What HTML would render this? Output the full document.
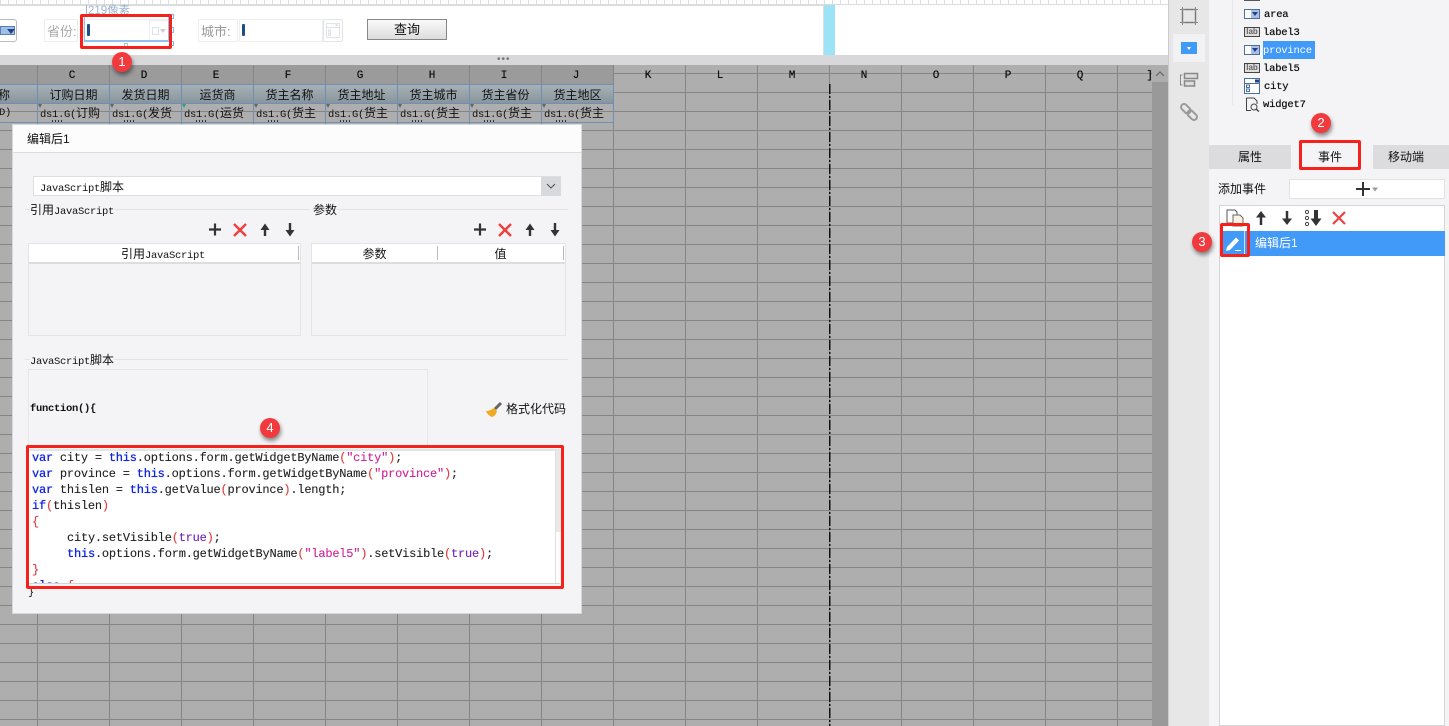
<!DOCTYPE html>
<html><head><meta charset="utf-8"><style>
html,body{margin:0;padding:0;width:1449px;height:726px;overflow:hidden;background:#fff}
body{position:relative;font-family:"Liberation Sans","Noto Sans CJK SC",sans-serif;font-size:12px;color:#111}
div,span,svg{position:absolute;box-sizing:border-box}
.t{white-space:nowrap;line-height:16px}
.m{font-family:"Liberation Mono","Noto Sans CJK SC",monospace;font-size:10.5px;letter-spacing:-.3px}
.z{position:static;font-family:"Liberation Sans","Noto Sans CJK SC",sans-serif;font-size:12px;letter-spacing:0}
.c{text-align:center}
.hc{top:67px;width:72px;height:18px;text-align:center;font:11px/19px "Liberation Mono",monospace;color:#111;text-shadow:0 0 .5px #111}
.h2{top:86px;height:18px;width:71px;text-align:center;font-size:12px;line-height:19px;color:#111;white-space:nowrap}
.d{top:104px;height:18px;width:71px;overflow:hidden;font:10.5px/18px "Liberation Mono",monospace;color:#111;white-space:nowrap;letter-spacing:-.3px;padding-left:2px}
.mk{top:104px;border:2.5px solid transparent;border-top:4px solid #666;border-bottom:0}
.dot{top:120px;width:12px;height:2px;background:repeating-linear-gradient(90deg,#333 0,#333 1px,transparent 1px,transparent 3px)}
.badge{width:20px;height:20px;border-radius:50%;background:#f03a3e;color:#fff;font-size:13px;line-height:20px;text-align:center;box-shadow:1px 3px 4px rgba(0,0,0,.45)}
.red{border:3px solid #f5211a;border-radius:2px}
.code{white-space:pre;font:12px/16px "Liberation Mono",monospace;letter-spacing:-.22px;color:#222;left:32px;text-shadow:0 0 .4px rgba(0,0,0,.45)}
.k{position:static;color:#0d22e0;text-shadow:0 0 .6px #0d22e0}.p{position:static;color:#f03a3a}.s{position:static;color:#dd1ea0}.b{position:static;color:#7a1fc8}.n{position:static}
.tree{font:10.5px/14px "Liberation Mono",monospace;color:#111;white-space:nowrap;letter-spacing:-.2px;text-shadow:0 0 .5px #111}
.ic{width:16px;height:10px;border:1px solid #4a6f9f;background:#fff}
.ic i{position:absolute;right:0;top:0;width:8px;height:8px;background:#a9c0e2}
.ic b{position:absolute;right:1px;top:2px;border:3px solid transparent;border-top:4px solid #23408c;border-bottom:0}
.lab{width:16px;height:10px;border:1px solid #444;background:#ddd;color:#666;font:bold 8px/8px "Liberation Sans",sans-serif;text-align:center}
.sec{height:1px;background:#e3e3e6}
</style></head><body>

<!-- top ruler -->
<div style="left:0;top:0;width:1169px;height:5px;background:repeating-linear-gradient(90deg,#ddd 0,#ddd 1px,#fff 1px,#fff 8px)"></div>
<div style="left:0;top:4px;width:1169px;height:2px;background:#dcdcde"></div>
<!-- parameter pane -->
<div style="left:824px;top:5px;width:11px;height:50px;background:#9be3f5"></div>
<div style="left:823px;top:5px;width:1px;height:50px;background:#ddd"></div>
<div style="left:0;top:55px;width:1169px;height:10px;background:#d8d8da"></div>
<div class="t" style="left:497px;top:52px;color:#777;font-size:10px;letter-spacing:1px">•••</div>

<!-- toolbar widgets -->
<div style="left:-8px;top:19px;width:25px;height:23px;border:1px solid #bbb;border-radius:3px;background:#fff"></div>
<div style="left:0;top:26px;width:15px;height:9px;background:#9fc0e6;border:1px solid #5a80b0"></div>
<div style="left:7px;top:29px;border:4px solid transparent;border-top:5px solid #23408c;border-bottom:0"></div>
<div class="t" style="left:85px;top:3px;color:#9bb3cc;font-size:11.500px;height:11px;overflow:hidden">|219像素</div>
<div style="left:44px;top:19px;width:34px;height:23px;border:1px solid #eee"></div>
<div class="t" style="left:47px;top:24px;color:#aaa;font-size:13px">省份:</div>
<div style="left:83px;top:19px;width:87px;height:23px;border:1px solid #eee"></div>
<div style="left:149px;top:20px;width:21px;height:21px;border:1px solid #eee"></div>
<div style="left:152px;top:27px;width:7px;height:8px;border:1px solid #dfe4ec"></div>
<div style="left:160px;top:29px;border:3px solid transparent;border-top:4px solid #ccd;border-bottom:0"></div>
<div style="left:87px;top:24px;width:3px;height:12px;background:#1c4f86;border-radius:1px"></div>
<div style="left:84px;top:40px;width:86px;height:2px;background:#8fc0ee"></div>
<div style="left:84px;top:17px;width:1px;height:25px;background:#8fc0ee"></div>
<div style="left:168px;top:17px;width:1px;height:25px;background:#8fc0ee"></div>
<div style="left:124px;top:43px;width:4px;height:4px;border:1px solid #9cc"></div>
<div style="left:170px;top:27px;width:4px;height:6px;border:1px solid #8fb8de"></div>
<div style="left:170px;top:41px;width:4px;height:5px;border:1px solid #8fb8de"></div>
<div style="left:170px;top:14px;width:4px;height:5px;border:1px solid #8fb8de"></div>
<div class="red" style="left:80px;top:14px;width:92px;height:35px"></div>
<div style="left:198px;top:19px;width:40px;height:23px;border:1px solid #eee"></div>
<div class="t" style="left:201px;top:24px;color:#999;font-size:13px">城市:</div>
<div style="left:239px;top:19px;width:84px;height:23px;border:1px solid #eee"></div>
<div style="left:242px;top:24px;width:3px;height:12px;background:#1c4f86;border-radius:1px"></div>
<div style="left:323px;top:19px;width:20px;height:23px;border:1px solid #e3e3e3;border-radius:2px"></div>
<svg style="left:326px;top:23px" width="14" height="15"><rect x=".5" y=".5" width="13" height="14" fill="#fff" stroke="#e0e3ea"/><path d="M.5 4.500h13M2.500 7h2v2h-2zM2.500 10.500h2v2h-2z" fill="none" stroke="#dfe3ea"/><path d="M9 1.500h3l-1.500 2z" fill="#cdd3de"/></svg>
<div style="left:367px;top:19px;width:80px;height:21px;border:1px solid #888;background:linear-gradient(#fafafa,#ddd);text-align:center;font-size:13px;line-height:19px;color:#111">查询</div>
<div style="left:835px;top:5px;width:334px;height:50px;background:#fff"></div>
<div style="left:1168px;top:0;width:1px;height:726px;background:#ccc"></div>

<!-- grid -->
<div style="left:0;top:65px;width:1152px;height:661px;background-color:#aeaeae;background-image:linear-gradient(90deg,#858585 1px,transparent 1px),linear-gradient(#858585 1px,transparent 1px);background-size:72px 19px;background-position:37px 84px"></div>
<div style="left:0;top:65px;width:613px;height:19px;background-color:#9b9b9b;background-image:linear-gradient(90deg,#858585 1px,transparent 1px);background-size:72px 19px;background-position:37px 0"></div>
<div style="left:0;top:84px;width:614px;height:19px;background:linear-gradient(#a9b2b8,#87969c)"></div>
<div style="left:0;top:84px;width:614px;height:39px;background-image:linear-gradient(90deg,#6f8fb5 1px,transparent 1px);background-size:72px 19px;background-position:37px 0"></div>
<div style="left:0;top:84px;width:614px;height:1px;background:#6f8fb5"></div>
<div style="left:0;top:103px;width:614px;height:1px;background:#6f8fb5"></div>
<div style="left:0;top:122px;width:614px;height:1px;background:#6f8fb5"></div>
<svg style="left:828px;top:84px" width="4" height="642"><path d="M1.750 0V642" stroke="#111" stroke-width="1.500" stroke-dasharray="10 2 2 2"/></svg>

<div class="hc" style="left:36px">C</div><div class="hc" style="left:108px">D</div><div class="hc" style="left:180px">E</div><div class="hc" style="left:252px">F</div><div class="hc" style="left:324px">G</div><div class="hc" style="left:396px">H</div><div class="hc" style="left:468px">I</div><div class="hc" style="left:540px">J</div><div class="hc" style="left:612px">K</div><div class="hc" style="left:684px">L</div><div class="hc" style="left:756px">M</div><div class="hc" style="left:828px">N</div><div class="hc" style="left:900px">O</div><div class="hc" style="left:972px">P</div><div class="hc" style="left:1044px">Q</div>
<div class="hc" style="left:1118px;width:35px;text-align:right">]</div>

<div class="h2" style="left:-6px;width:20px">称</div>
<div class="h2" style="left:38px">订购日期</div><div class="h2" style="left:110px">发货日期</div><div class="h2" style="left:182px">运货商</div><div class="h2" style="left:254px">货主名称</div><div class="h2" style="left:326px">货主地址</div><div class="h2" style="left:398px">货主城市</div><div class="h2" style="left:470px">货主省份</div><div class="h2" style="left:542px">货主地区</div>
<div class="t m" style="left:-1px;top:105px">D)</div>
<div class="d" style="left:38px">ds1.G(<span class="z">订购</span></div><div class="d" style="left:110px">ds1.G(<span class="z">发货</span></div><div class="d" style="left:182px">ds1.G(<span class="z">运货</span></div><div class="d" style="left:254px">ds1.G(<span class="z">货主</span></div><div class="d" style="left:326px">ds1.G(<span class="z">货主</span></div><div class="d" style="left:398px">ds1.G(<span class="z">货主</span></div><div class="d" style="left:470px">ds1.G(<span class="z">货主</span></div><div class="d" style="left:542px">ds1.G(<span class="z">货主</span></div>
<div class="mk" style="left:38px"></div><div class="mk" style="left:110px"></div><div class="mk" style="left:182px;border-top-color:#2f9d80"></div><div class="mk" style="left:254px"></div><div class="mk" style="left:326px"></div><div class="mk" style="left:398px"></div><div class="mk" style="left:470px"></div><div class="mk" style="left:542px"></div>
<div class="dot" style="left:52px"></div><div class="dot" style="left:124px"></div><div class="dot" style="left:196px"></div><div class="dot" style="left:268px"></div><div class="dot" style="left:340px"></div><div class="dot" style="left:412px"></div><div class="dot" style="left:484px"></div><div class="dot" style="left:556px"></div>

<!-- scrollbar -->
<div style="left:1152px;top:65px;width:16px;height:661px;background:#999"></div>
<div style="left:1152px;top:65px;width:16px;height:17px;background:#aeaeae"></div>
<svg style="left:1155px;top:70px" width="10" height="7"><path d="M1 6 L5 2 L9 6" fill="none" stroke="#666" stroke-width="1.200"/></svg>

<!-- left icon bar -->
<div style="left:1169px;top:0;width:40px;height:726px;background:#e7e7e7"></div>
<div style="left:1173px;top:34px;width:32px;height:28px;background:#f2f2f4"></div>
<svg style="left:1180px;top:7px" width="18" height="18"><rect x="2.500" y="2.500" width="13" height="13" fill="none" stroke="#777" stroke-width="1.400"/><path d="M0 2.500h5M13 2.500h5M0 15.500h5M13 15.500h5M2.500 0v5M15.500 0v5M2.500 13v5M15.500 13v5" stroke="#888"/></svg>
<div style="left:1181px;top:42px;width:16px;height:12px;background:#3f9bf5"></div>
<div style="left:1187px;top:47px;border:2.500px solid transparent;border-top:3.500px solid #fff;border-bottom:0"></div>
<svg style="left:1179px;top:72px" width="20" height="16"><path d="M3.500 3H1.500V13H3.500" fill="none" stroke="#888"/><rect x="5.500" y="1.500" width="13" height="5" fill="#ddd" stroke="#888" stroke-width="1.500"/><rect x="5.500" y="9" width="10" height="5" fill="#ddd" stroke="#888" stroke-width="1.500"/></svg>
<svg style="left:1180px;top:103px" width="18" height="18"><g transform="rotate(45 9 9)" fill="none" stroke="#999" stroke-width="2"><rect x="-1" y="6" width="11" height="6" rx="3"/><rect x="8" y="6" width="11" height="6" rx="3"/></g></svg>

<!-- right panel -->
<div style="left:1209px;top:0;width:240px;height:726px;background:#f4f4f7"></div>
<div style="left:1232px;top:0;width:1px;height:105px;background:#e8e8e8"></div>
<div style="left:1244px;top:0;width:16px;height:1px;background:#555"></div>
<div class="ic" style="left:1244px;top:9px"><i></i><b></b></div><div class="tree" style="left:1264px;top:8px">area</div>
<div class="lab" style="left:1244px;top:27px">lab</div><div class="tree" style="left:1263px;top:26px">label3</div>
<div style="left:1263px;top:41px;width:52px;height:18px;background:#4199f8"></div>
<div class="ic" style="left:1244px;top:45px"><i></i><b></b></div><div class="tree" style="left:1263px;top:44px;color:#fff;text-shadow:none">province</div>
<div class="lab" style="left:1244px;top:63px">lab</div><div class="tree" style="left:1263px;top:62px">label5</div>
<svg style="left:1244px;top:78px" width="16" height="16"><rect x=".5" y=".5" width="15" height="15" fill="#fff" stroke="#4a6f9f"/><path d="M.5 5.500h15" stroke="#4a6f9f"/><path d="M11 1.500h4v3h-4z" fill="#23408c"/><rect x="2.500" y="7" width="3" height="2.500" fill="none" stroke="#4a6f9f"/><rect x="2.500" y="11" width="3" height="2.500" fill="none" stroke="#4a6f9f"/></svg>
<div class="tree" style="left:1264px;top:80px">city</div>
<svg style="left:1245px;top:97px" width="15" height="15"><path d="M1.500 1H9l3 3v3M1.500 1v12.500H6" fill="none" stroke="#444"/><circle cx="9" cy="10" r="3" fill="none" stroke="#444"/><path d="M11 12l3 2.500" stroke="#444" stroke-width="1.400"/></svg>
<div class="tree" style="left:1263px;top:98px">widget7</div>

<!-- tabs -->
<div style="left:1209px;top:145px;width:82px;height:24px;background:#dcdcdf;text-align:center;font-size:12px;line-height:25px">属性</div>
<div style="left:1301px;top:145px;width:58px;height:24px;background:#f4f4f7;text-align:center;font-size:12px;line-height:25px">事件</div>
<div style="left:1373px;top:145px;width:76px;height:24px;background:#dcdcdf;text-align:center;font-size:12px;line-height:25px;padding-right:10px">移动端</div>
<div class="red" style="left:1299px;top:140px;width:62px;height:30px"></div>
<div class="t" style="left:1218px;top:181px;font-size:12px">添加事件</div>
<div style="left:1289px;top:179px;width:156px;height:20px;background:#fff;border:1px solid #e2e2e2"></div>
<svg style="left:1355px;top:182px" width="24" height="14"><path d="M8 0v14M1 7h14" stroke="#333" stroke-width="2"/><path d="M17 5.500h6l-3 4z" fill="#999"/></svg>
<div style="left:1219px;top:205px;width:226px;height:521px;background:#fff;border:1px solid #d6d6da"></div>
<svg style="left:1226px;top:209px" width="20" height="18"><path d="M1 1h8l2 2v4H7v7H1z" fill="#fff" stroke="#555"/><path d="M7 6h7l3 3v8H7z" fill="#fbf3e2" stroke="#666"/></svg>
<svg style="left:1255px;top:210px" width="12" height="16"><path d="M6 15V5" stroke="#333" stroke-width="2.500"/><path d="M1 7.500L6 1l5 6.500z" fill="#333"/></svg>
<svg style="left:1281px;top:210px" width="12" height="16"><path d="M6 1v10" stroke="#333" stroke-width="2.500"/><path d="M1 8.500L6 15l5-6.500z" fill="#333"/></svg>
<svg style="left:1304px;top:209px" width="20" height="18"><circle cx="3" cy="3" r="1.600" fill="none" stroke="#444"/><circle cx="3" cy="9" r="1.600" fill="none" stroke="#444"/><circle cx="3" cy="15" r="1.600" fill="none" stroke="#444"/><path d="M12 1v10" stroke="#333" stroke-width="4"/><path d="M6.500 9.500h11l-5.500 7.500z" fill="#333"/></svg>
<svg style="left:1332px;top:211px" width="14" height="14"><path d="M1 1l12 12M13 1L1 13" stroke="#ee4040" stroke-width="2.200"/></svg>
<div style="left:1220px;top:231px;width:225px;height:25px;background:#4199f8"></div>
<div style="left:1244px;top:231px;width:1px;height:25px;background:#cfe4fb"></div>
<svg style="left:1224px;top:235px" width="18" height="18"><path d="M3 12L12 2.500l3 3L6 15l-4 1z" fill="#fff"/><path d="M11 15.500h6" stroke="#fff"/></svg>
<div class="t" style="left:1255px;top:235px;color:#fff;font-size:12px">编辑后1</div>
<div class="red" style="left:1220px;top:223px;width:30px;height:34px"></div>

<!-- dialog -->
<div style="left:12px;top:124px;width:570px;height:490px;background:#f4f4f7;border:1px solid #d8d8da"></div>
<div style="left:13px;top:125px;width:568px;height:28px;background:#fcfcfd;border-bottom:1px solid #dcdce0"></div>
<div class="t" style="left:27px;top:131px;font-size:12px">编辑后1</div>

<div style="left:33px;top:176px;width:528px;height:20px;background:#fff;border:1px solid #dedee2"></div>
<div style="left:541px;top:177px;width:20px;height:19px;background:#d8d9dd"></div>
<svg style="left:546px;top:183px" width="10" height="6"><path d="M1 1l4 4 4-4" fill="none" stroke="#555" stroke-width="1.100"/></svg>
<div class="t m" style="left:40px;top:179px">JavaScript<span class="z">脚本</span></div>

<div class="sec" style="left:25px;top:209px;width:285px"></div>
<div class="sec" style="left:312px;top:209px;width:256px"></div>
<div class="t m" style="left:30px;top:202px;background:#f4f4f7"><span class="z">引用</span>JavaScript</div>
<div class="t" style="left:313px;top:202px;font-size:12px;background:#f4f4f7">参数</div>

<svg style="left:208px;top:222px" width="90" height="15"><path d="M7 1.500v12M1 7.500h12" stroke="#333" stroke-width="2.200" fill="none"/><path d="M26 2l12 12M38 2L26 14" stroke="#ee4040" stroke-width="2.400" fill="none"/><path d="M57 14V5M82 1v9" stroke="#333" stroke-width="2.400" fill="none"/><path d="M52.500 8L57 1.500 61.500 8zM77.500 8L82 14.500 86.500 8z" fill="#333"/></svg>
<svg style="left:473px;top:222px" width="90" height="15"><path d="M7 1.500v12M1 7.500h12" stroke="#333" stroke-width="2.200" fill="none"/><path d="M26 2l12 12M38 2L26 14" stroke="#ee4040" stroke-width="2.400" fill="none"/><path d="M57 14V5M82 1v9" stroke="#333" stroke-width="2.400" fill="none"/><path d="M52.500 8L57 1.500 61.500 8zM77.500 8L82 14.500 86.500 8z" fill="#333"/></svg>

<div style="left:28px;top:243px;width:273px;height:93px;border:1px solid #e4e4e8"></div>
<div style="left:29px;top:244px;width:271px;height:20px;background:#fff;border-bottom:2px solid #ddd"></div>
<div style="left:298px;top:246px;width:1px;height:14px;background:#bbb"></div>
<div class="t m c" style="left:29px;top:246px;width:268px"><span class="z">引用</span>JavaScript</div>
<div style="left:311px;top:243px;width:255px;height:93px;border:1px solid #e4e4e8"></div>
<div style="left:312px;top:244px;width:253px;height:20px;background:#fff;border-bottom:2px solid #ddd"></div>
<div style="left:437px;top:246px;width:1px;height:14px;background:#bbb"></div>
<div style="left:563px;top:246px;width:1px;height:14px;background:#bbb"></div>
<div class="t c" style="left:312px;top:246px;width:125px">参数</div>
<div class="t c" style="left:438px;top:246px;width:125px">值</div>

<div class="sec" style="left:25px;top:359px;width:543px"></div>
<div class="t m" style="left:30px;top:352px;background:#f4f4f7">JavaScript<span class="z">脚本</span></div>
<div style="left:28px;top:369px;width:400px;height:77px;border:1px solid #e6e6ea;border-bottom:0"></div>
<div class="t m" style="left:30px;top:401px;font-weight:bold">function(){</div>
<svg style="left:485px;top:401px" width="18" height="17"><path d="M10 8l6-6" stroke="#666" stroke-width="3"/><path d="M1 10c4 0 6-2 8-3l3 3c-1 3-2 5-5 6-2-1-5-3-6-6z" fill="#f0a922"/></svg>
<div class="t" style="left:506px;top:401px;font-size:12px">格式化代码</div>

<div style="left:29px;top:449px;width:531px;height:135px;background:#fff;border-top:2px solid #e4e4e4;border-bottom:1px solid #d4d4d4"></div>
<div style="left:555px;top:451px;width:1px;height:132px;background:#e0e0e0"></div>
<div style="left:556px;top:451px;width:5px;height:81px;background:#e8e8e8"></div>
<div class="code" style="top:450px"><span class="k">var</span> city = <span class="k">this</span>.options.form.getWidgetByName<span class="p">(</span><span class="s">"city"</span><span class="p">)</span>;</div>
<div class="code" style="top:466px"><span class="k">var</span> province = <span class="k">this</span>.options.form.getWidgetByName<span class="p">(</span><span class="s">"province"</span><span class="p">)</span>;</div>
<div class="code" style="top:482px"><span class="k">var</span> thislen = <span class="k">this</span>.getValue<span class="p">(</span>province<span class="p">)</span>.length;</div>
<div class="code" style="top:498px"><span class="k">if</span><span class="p">(</span>thislen<span class="p">)</span></div>
<div class="code" style="top:514px"><span class="p">{</span></div>
<div class="code" style="top:530px;left:67px"><span class="n">city.setVisible</span><span class="p">(</span><span class="b">true</span><span class="p">)</span>;</div>
<div class="code" style="top:546px;left:67px"><span class="k">this</span>.options.form.getWidgetByName<span class="p">(</span><span class="s">"label5"</span><span class="p">)</span>.setVisible<span class="p">(</span><span class="b">true</span><span class="p">)</span>;</div>
<div class="code" style="top:562px"><span class="p">}</span></div>
<div style="left:28px;top:578px;width:530px;height:5px;overflow:hidden"><div class="code" style="left:4px;top:0"><span class="k">else</span> <span class="p">{</span></div></div>
<div class="t m" style="left:28px;top:585px">}</div>
<div class="red" style="left:26px;top:445px;width:538px;height:144px"></div>

<!-- badges -->
<div class="badge" style="left:112px;top:52px">1</div>
<div class="badge" style="left:1311px;top:113px">2</div>
<div class="badge" style="left:1192px;top:232px">3</div>
<div class="badge" style="left:260px;top:418px">4</div>
</body></html>
